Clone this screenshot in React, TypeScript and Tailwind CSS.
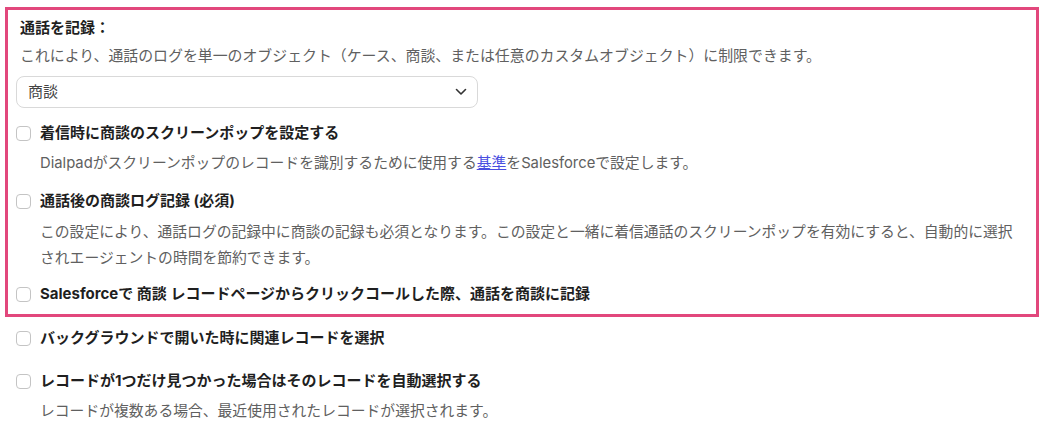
import React from "react";

const font = { fontFamily: 'Inter, "Noto Sans CJK JP", "Noto Sans", sans-serif' };

function Box() {
  return <span className="inline-block w-[15px] h-[15px] shrink-0 rounded-[4px] border border-[#c4c4c4] bg-white" />;
}

function Row({ label }: { label: React.ReactNode }) {
  return (
    <div className="flex items-center h-[20px] pl-[16px]">
      <Box />
      <span className="ml-[9px] text-[15px] leading-[20px] font-bold text-[#1f1f1f]">{label}</span>
    </div>
  );
}

function Desc({ children, className = "" }: { children: React.ReactNode; className?: string }) {
  return (
    <div className={"pl-[40px] pr-[10px] text-[14.8px] leading-[26px] text-[#606060] " + className}>{children}</div>
  );
}

export default function App() {
  return (
    <div className="w-[1047px] h-[435px] bg-white overflow-hidden" style={font}>
      <div className="pt-[7px] pl-[5px] w-[1039px]">
        <div className="border-[3px] border-[#e2477c] pt-[8px] pb-[10px]">
          <div className="pl-[12px] text-[15px] leading-[20px] font-bold text-[#1f1f1f]">通話を記録：</div>
          <div className="mt-[8px] pl-[12px] text-[14.9px] leading-[20px] text-[#606060]">
            これにより、通話のログを単一のオブジェクト（ケース、商談、または任意のカスタムオブジェクト）に制限できます。
          </div>
          <div className="mt-[10px] ml-[8px] w-[462px] h-[32px] rounded-[8px] border border-[#d9d9d9] flex items-center justify-between pl-[11px] pr-[10px]">
            <span className="text-[15px] text-[#444]">商談</span>
            <svg width="12" height="8" viewBox="0 0 12 8" fill="none">
              <path d="M1.5 1.5 L6 6 L10.5 1.5" stroke="#333" strokeWidth="1.6" strokeLinecap="round" strokeLinejoin="round" />
            </svg>
          </div>
          <div className="-ml-[8px]">
            <div className="mt-[15px]">
              <Row label="着信時に商談のスクリーンポップを設定する" />
            </div>
            <Desc className="mt-[7px]">
              Dialpadがスクリーンポップのレコードを識別するために使用する
              <span className="text-[#4a4ee0] underline">基準</span>
              をSalesforceで設定します。
            </Desc>
            <div className="mt-[15px]">
              <Row label="通話後の商談ログ記録 (必須)" />
            </div>
            <Desc className="mt-[8px]">
              この設定により、通話ログの記録中に商談の記録も必須となります。この設定と一緒に着信通話のスクリーンポップを有効にすると、自動的に選択されエージェントの時間を節約できます。
            </Desc>
            <div className="mt-[13px]">
              <Row label="Salesforceで 商談 レコードページからクリックコールした際、通話を商談に記録" />
            </div>
          </div>
        </div>
      </div>
      <div className="mt-[11px]">
        <Row label="バックグラウンドで開いた時に関連レコードを選択" />
      </div>
      <div className="mt-[23px]">
        <Row label="レコードが1つだけ見つかった場合はそのレコードを自動選択する" />
      </div>
      <Desc className="mt-[7px]">レコードが複数ある場合、最近使用されたレコードが選択されます。</Desc>
    </div>
  );
}
